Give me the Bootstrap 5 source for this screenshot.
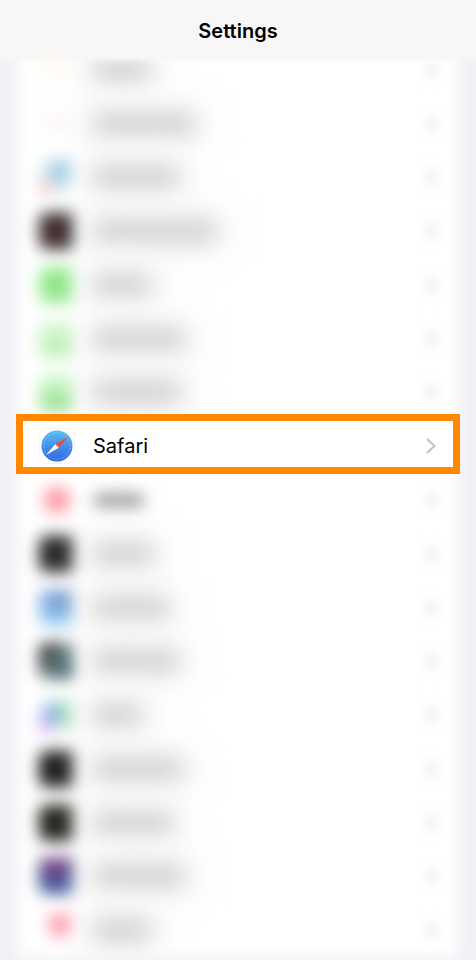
<!DOCTYPE html>
<html lang="en">
<head>
<meta charset="utf-8">
<meta name="viewport" content="width=device-width, initial-scale=1">
<title>Settings</title>
<link href="https://cdn.jsdelivr.net/npm/bootstrap@5.3.0/dist/css/bootstrap.min.css" rel="stylesheet">
<style>
body { background: #f1f0f6; font-family: Inter, "Liberation Sans", sans-serif; color: #000; }
.title-bar { height: 58px; background: linear-gradient(90deg, #f9f7f6, #f7f7f7 30%); z-index: 2; box-shadow: 0 2px 5px #f7f7f7; }
.title-bar h1 { font-size: 20px; line-height: 24px; font-weight: 600; padding-top: 3px; }
.app-list { margin: -15px 16px 3px; isolation: isolate; }
.app-list::before { content: ""; position: absolute; inset: 0 2px; background: #fff; filter: blur(7px); z-index: -1; }
.app-row { flex: 1 1 48px; padding: 0 24px 0 23px; gap: 18px; }
.app-icon { width: 36px; height: 36px; flex: none; border-radius: 8px; }
.soft .app-icon { filter: blur(8px); background: var(--tint); }
.app-name { width: var(--w); height: 22px; border-radius: 10px; background: #d2d2d2; box-shadow: 0 0 16px 14px #f5f5f5; filter: blur(11px); }
.app-name.near { height: 15px; background: #a0a0a0; box-shadow: none; filter: blur(8px); }
.dot { width: 9px; height: 14px; background: #ebebeb; filter: blur(6px); }
.chosen { flex-basis: 54px; border: 7px solid #ff8800; margin: -5px 0 -1px; padding: 4px 17px 0 16px; background: #fff; color: #000; font-size: 20px; line-height: 24px; z-index: 1; }
.chosen:hover { color: #000; }
.t-pale { --tint: linear-gradient(#fffaf0, #fff); }
.t-blush { --tint: radial-gradient(#fbf1f2, #fff 70%); }
.t-sky { --tint: radial-gradient(circle at 10% 85%, #f9b5ae, #f9b5ae00 35%), radial-gradient(circle at 60% 35%, #7cb9d9, #eef8fc 62%); }
.t-wine { --tint: radial-gradient(circle at 38% 50%, #603535, #211e20 65%); }
.t-green { --tint: radial-gradient(#80e278, #a8f0a2); }
.t-mint { --tint: linear-gradient(#dcf9da, #b4eeae); }
.t-leaf { --tint: linear-gradient(#ccf8ca 20%, #b2edac 65%, #6bcb64); }
.t-rose { --tint: radial-gradient(#ff7f8c 15%, #ffb5bc 45%, #fff 68%); }
.t-coal { --tint: radial-gradient(#323334, #111212); }
.t-blue { --tint: radial-gradient(circle at 65% 30%, #6c8fb4, #6c8fb400 45%), linear-gradient(#7ba2e2, #98d1f5); }
.t-steel { --tint: linear-gradient(125deg, #252a2b 20%, #707d7b 48%, #3d6c7c 68%, #1d2e34); }
.t-rainbow { --tint: radial-gradient(circle at 8% 90%, #c788f4, #c788f400 38%), radial-gradient(circle at 35% 45%, #5c9ae0, #5c9ae000 50%), radial-gradient(circle at 75% 50%, #82dc92, #fff 65%); }
.t-black { --tint: radial-gradient(#262626, #0c0c0c); }
.t-olive { --tint: radial-gradient(#2c2c26, #12120c); }
.t-violet { --tint: radial-gradient(circle at 45% 25%, #97408a, #97408a00 50%), linear-gradient(#2f2a6e, #435693 60%, #345ca0); }
.t-pink { --tint: radial-gradient(circle at 60% 35%, #ff748c 8%, #ffb4c1 30%, #fff 52%); }
</style>
</head>
<body>
<div class="d-flex flex-column min-vh-100 overflow-hidden">
  <header class="title-bar position-relative d-flex align-items-center justify-content-center">
    <h1 class="m-0">Settings</h1>
  </header>
  <main class="app-list position-relative d-flex flex-column flex-grow-1">
    <div class="app-row soft d-flex align-items-center"><span class="app-icon t-pale"></span><span class="app-name" style="--w:58px"></span><span class="dot ms-auto"></span></div>
    <div class="app-row soft d-flex align-items-center"><span class="app-icon t-blush"></span><span class="app-name" style="--w:102px"></span><span class="dot ms-auto"></span></div>
    <div class="app-row soft d-flex align-items-center"><span class="app-icon t-sky"></span><span class="app-name" style="--w:86px"></span><span class="dot ms-auto"></span></div>
    <div class="app-row soft d-flex align-items-center"><span class="app-icon t-wine"></span><span class="app-name" style="--w:124px"></span><span class="dot ms-auto"></span></div>
    <div class="app-row soft d-flex align-items-center"><span class="app-icon t-green"></span><span class="app-name" style="--w:58px"></span><span class="dot ms-auto"></span></div>
    <div class="app-row soft d-flex align-items-center"><span class="app-icon t-mint"></span><span class="app-name" style="--w:92px"></span><span class="dot ms-auto"></span></div>
    <div class="app-row soft d-flex align-items-center"><span class="app-icon t-leaf"></span><span class="app-name" style="--w:88px"></span><span class="dot ms-auto"></span></div>
    <a href="#safari" class="app-row chosen position-relative d-flex align-items-center text-decoration-none">
      <svg class="app-icon" viewBox="0 0 36 36" aria-hidden="true">
        <defs><linearGradient id="sky" x1="0" y1="0" x2="0" y2="1"><stop offset="0" stop-color="#59bdf3"/><stop offset="1" stop-color="#3164e2"/></linearGradient></defs>
        <rect x=".5" y=".5" width="35" height="35" rx="8" fill="#fff" stroke="#f5f5f7"/>
        <circle cx="18" cy="18" r="15.5" fill="url(#sky)"/>
        <circle cx="18" cy="18" r="13.2" fill="none" stroke="#c3e0fb" stroke-width="1.4" stroke-dasharray=".6 1.7" opacity=".65"/>
        <path d="M29 9 19.8 19.8 16.2 16.2Z" fill="#f04a3e"/>
        <path d="M7 27 16.2 16.2 19.8 19.8Z" fill="#fff"/>
      </svg>
      <span>Safari</span>
      <svg class="ms-auto" width="10" height="16" viewBox="0 0 10 16" aria-hidden="true"><path d="M1.5 1.5 8.5 8l-7 6.500" fill="none" stroke="#c2c2c5" stroke-width="2" stroke-linecap="round" stroke-linejoin="round"/></svg>
    </a>
    <div class="app-row soft d-flex align-items-center"><span class="app-icon t-rose"></span><span class="app-name near" style="--w:52px"></span><span class="dot ms-auto"></span></div>
    <div class="app-row soft d-flex align-items-center"><span class="app-icon t-coal"></span><span class="app-name" style="--w:61px"></span><span class="dot ms-auto"></span></div>
    <div class="app-row soft d-flex align-items-center"><span class="app-icon t-blue"></span><span class="app-name" style="--w:76px"></span><span class="dot ms-auto"></span></div>
    <div class="app-row soft d-flex align-items-center"><span class="app-icon t-steel"></span><span class="app-name" style="--w:86px"></span><span class="dot ms-auto"></span></div>
    <div class="app-row soft d-flex align-items-center"><span class="app-icon t-rainbow"></span><span class="app-name" style="--w:49px"></span><span class="dot ms-auto"></span></div>
    <div class="app-row soft d-flex align-items-center"><span class="app-icon t-black"></span><span class="app-name" style="--w:90px"></span><span class="dot ms-auto"></span></div>
    <div class="app-row soft d-flex align-items-center"><span class="app-icon t-olive"></span><span class="app-name" style="--w:80px"></span><span class="dot ms-auto"></span></div>
    <div class="app-row soft d-flex align-items-center"><span class="app-icon t-violet"></span><span class="app-name" style="--w:92px"></span><span class="dot ms-auto"></span></div>
    <div class="app-row soft d-flex align-items-center"><span class="app-icon t-pink"></span><span class="app-name" style="--w:58px"></span><span class="dot ms-auto"></span></div>
  </main>
</div>
<script src="https://cdn.jsdelivr.net/npm/bootstrap@5.3.0/dist/js/bootstrap.bundle.min.js"></script>
</body>
</html>
